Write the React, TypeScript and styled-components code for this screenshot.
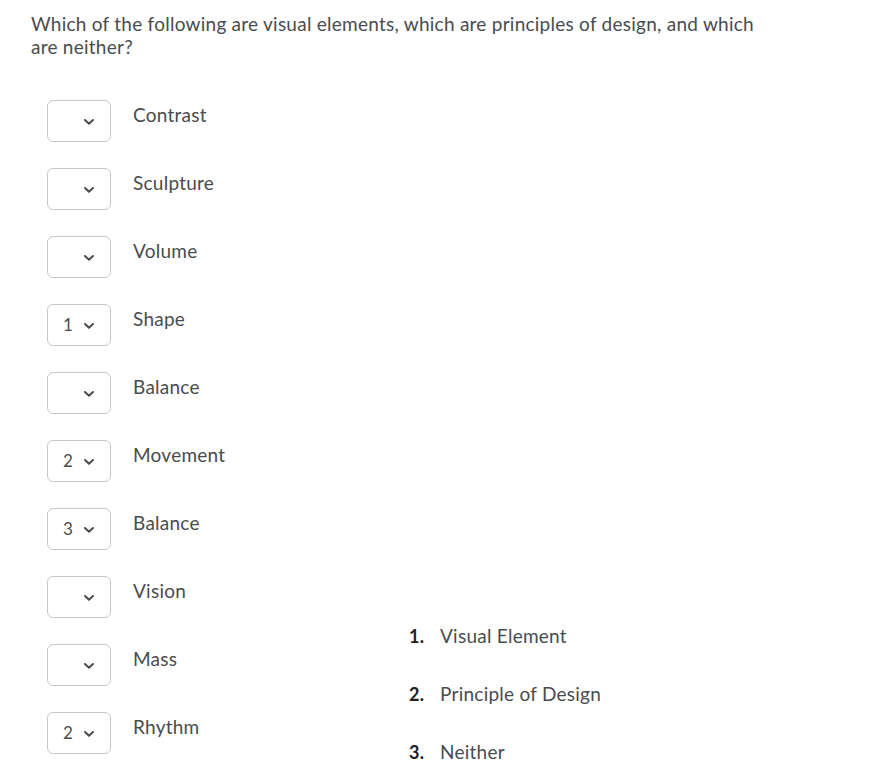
import React from "react";
import styled, { createGlobalStyle } from "styled-components";

const Global = createGlobalStyle`
  html, body { margin: 0; padding: 0; background: #ffffff; }
  body { font-family: Lato, "Open Sans", sans-serif; color: #494c4e; letter-spacing: 0.25px; }
`;

const Page = styled.div`
  box-sizing: border-box;
  min-height: 780px;
  padding: 12px 0 0 31px;
  width: 852px;
`;

const Question = styled.p`
  margin: 0;
  font-size: 19px;
  line-height: 23px;
  width: 740px;
`;

const Body = styled.div`
  display: flex;
  align-items: flex-end;
  margin-top: 42px;
`;

const Items = styled.div`
  display: flex;
  flex-direction: column;
  gap: 26px;
  padding-left: 16px;
  margin-bottom: 12px;
  width: 362px;
`;

const Row = styled.div`
  display: flex;
  align-items: flex-start;
  gap: 22px;
`;

const SelectBox = styled.div`
  position: relative;
  box-sizing: border-box;
  width: 64px;
  height: 42px;
  border: 1px solid #c3c9cf;
  border-radius: 6px;
  background: #fff;
`;

const Value = styled.span`
  position: absolute;
  left: 15px;
  top: 9px;
  font-size: 17px;
  line-height: 22px;
  color: #494c4e;
`;

const Chevron = styled.svg`
  position: absolute;
  left: 35px;
  top: 17px;
  width: 12px;
  height: 8px;
`;

const Label = styled.span`
  font-size: 19px;
  line-height: 28px;
  padding-top: 1px;
`;

const Legend = styled.ol`
  list-style: none;
  margin: 0;
  padding: 0;
  display: flex;
  flex-direction: column;
  gap: 30px;
`;

const LegendItem = styled.li`
  display: flex;
  align-items: baseline;
  font-size: 19px;
  line-height: 28px;
`;

const Num = styled.span`
  width: 31px;
  color: #202122;
  font-weight: 700;
  font-size: 18px;
`;

const items: [string, string][] = [
  ["", "Contrast"],
  ["", "Sculpture"],
  ["", "Volume"],
  ["1", "Shape"],
  ["", "Balance"],
  ["2", "Movement"],
  ["3", "Balance"],
  ["", "Vision"],
  ["", "Mass"],
  ["2", "Rhythm"],
];

const choices = ["Visual Element", "Principle of Design", "Neither"];

export default function App() {
  return (
    <>
      <Global />
      <Page>
        <Question>
          Which of the following are visual elements, which are principles of design, and which are neither?
        </Question>
        <Body>
          <Items>
            {items.map(([v, l], i) => (
              <Row key={i}>
                <SelectBox>
                  {v && <Value>{v}</Value>}
                  <Chevron viewBox="0 0 12 8">
                    <path d="M2 2 L6 5.8 L10 2" fill="none" stroke="#494c4e" strokeWidth="2" strokeLinecap="round" strokeLinejoin="round" />
                  </Chevron>
                </SelectBox>
                <Label>{l}</Label>
              </Row>
            ))}
          </Items>
          <Legend>
            {choices.map((c, i) => (
              <LegendItem key={i}>
                <Num>{i + 1}.</Num>
                <span>{c}</span>
              </LegendItem>
            ))}
          </Legend>
        </Body>
      </Page>
    </>
  );
}
